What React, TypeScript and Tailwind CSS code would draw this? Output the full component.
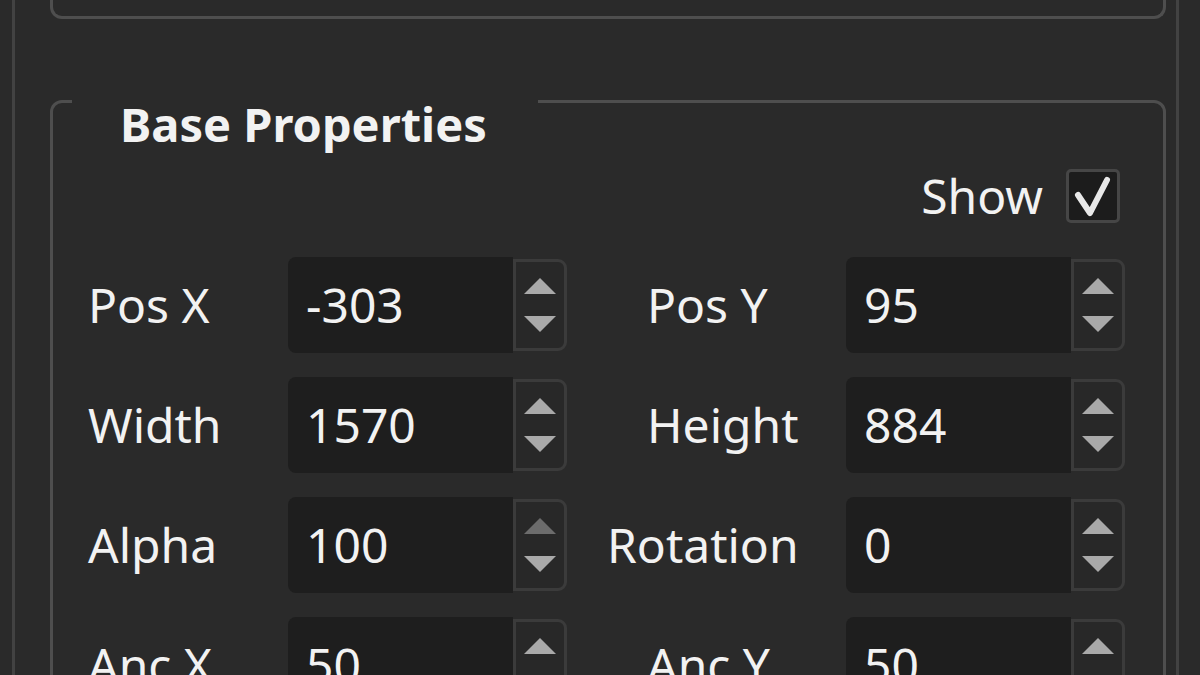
import React from "react";

type Field = { label: string; value: string; pad: string; upDisabled?: boolean };

const rows: [Field, Field][] = [
  [
    { label: "Pos X", value: "-303", pad: "pl-[35px]" },
    { label: "Pos Y", value: "95", pad: "pl-[80px]" },
  ],
  [
    { label: "Width", value: "1570", pad: "pl-[35px]" },
    { label: "Height", value: "884", pad: "pl-[80px]" },
  ],
  [
    { label: "Alpha", value: "100", pad: "pl-[35px]", upDisabled: true },
    { label: "Rotation", value: "0", pad: "pl-[40px]" },
  ],
  [
    { label: "Anc X", value: "50", pad: "pl-[35px]" },
    { label: "Anc Y", value: "50", pad: "pl-[80px]" },
  ],
];

function Arrow({ dir, disabled }: { dir: "up" | "down"; disabled?: boolean }) {
  const fill = disabled ? "#6c6c6c" : "#a9a9a9";
  return (
    <svg width="34" height="18" viewBox="0 0 34 18">
      {dir === "up" ? (
        <polygon points="17,1 33,17 1,17" fill={fill} />
      ) : (
        <polygon points="1,1 33,1 17,17" fill={fill} />
      )}
    </svg>
  );
}

function SpinBox({ value, upDisabled }: { value: string; upDisabled?: boolean }) {
  return (
    <div className="flex h-[96px] w-[279px]">
      <div className="flex-1 rounded-l-[8px] bg-[#1e1e1e] pl-[18px] leading-[96px]">{value}</div>
      <div className="my-[2px] flex w-[54px] flex-col items-center justify-center gap-[20px] rounded-r-[9px] border-[3px] border-[#3b3b3b] bg-[#282828]">
        <Arrow dir="up" disabled={upDisabled} />
        <Arrow dir="down" />
      </div>
    </div>
  );
}

function Row({ pair }: { pair: [Field, Field] }) {
  return (
    <div className="flex h-[96px] shrink-0 items-stretch">
      <div className={`w-[235px] ${pair[0].pad} leading-[96px] whitespace-nowrap`}>{pair[0].label}</div>
      <SpinBox value={pair[0].value} upDisabled={pair[0].upDisabled} />
      <div className={`w-[279px] ${pair[1].pad} leading-[96px] whitespace-nowrap`}>{pair[1].label}</div>
      <SpinBox value={pair[1].value} upDisabled={pair[1].upDisabled} />
    </div>
  );
}

export default function App() {
  return (
    <div
      className="h-[675px] w-[1200px] overflow-hidden bg-[#2a2a2a] text-[48px] text-[#f2f2f2]"
      style={{ fontFamily: "'Noto Sans', 'Open Sans', sans-serif" }}
    >
      <div className="ml-[12px] flex h-full w-[1167px] flex-col border-x-[3px] border-[#424242] pl-[35px] pr-[10px]">
        {/* previous group, only its lower edge is visible */}
        <div className="h-[19px] shrink-0 rounded-b-[12px] border-x-[3px] border-b-[3px] border-[#4e4e4e]" />

        {/* Base Properties group */}
        <div className="relative mt-[81px] flex h-[700px] shrink-0 flex-col rounded-[12px] border-[3px] border-[#4e4e4e]">
          <div className="absolute -top-[3px] left-[19px] h-[3px] w-[466px] bg-[#2a2a2a]" />
          <div className="mt-[1px] pl-[67px] text-[47px] font-bold leading-[40px]">Base Properties</div>

          <div className="mt-[25px] flex h-[54px] items-center justify-end gap-[23px] pr-[43px]">
            <span className="leading-[54px]">Show</span>
            <div className="h-[54px] w-[54px] rounded-[5px] border-[3px] border-[#464646] bg-[#1c1c1c]">
              <svg width="48" height="48" viewBox="0 0 48 48">
                <polyline
                  points="9,23 21,41 38,8"
                  fill="none"
                  stroke="#e8e8e8"
                  strokeWidth="6"
                  strokeLinecap="round"
                  strokeLinejoin="round"
                />
              </svg>
            </div>
          </div>

          <div className="mt-[34px] flex flex-col gap-[24px]">
            {rows.map((pair, i) => (
              <Row key={i} pair={pair} />
            ))}
          </div>
        </div>
      </div>
    </div>
  );
}
